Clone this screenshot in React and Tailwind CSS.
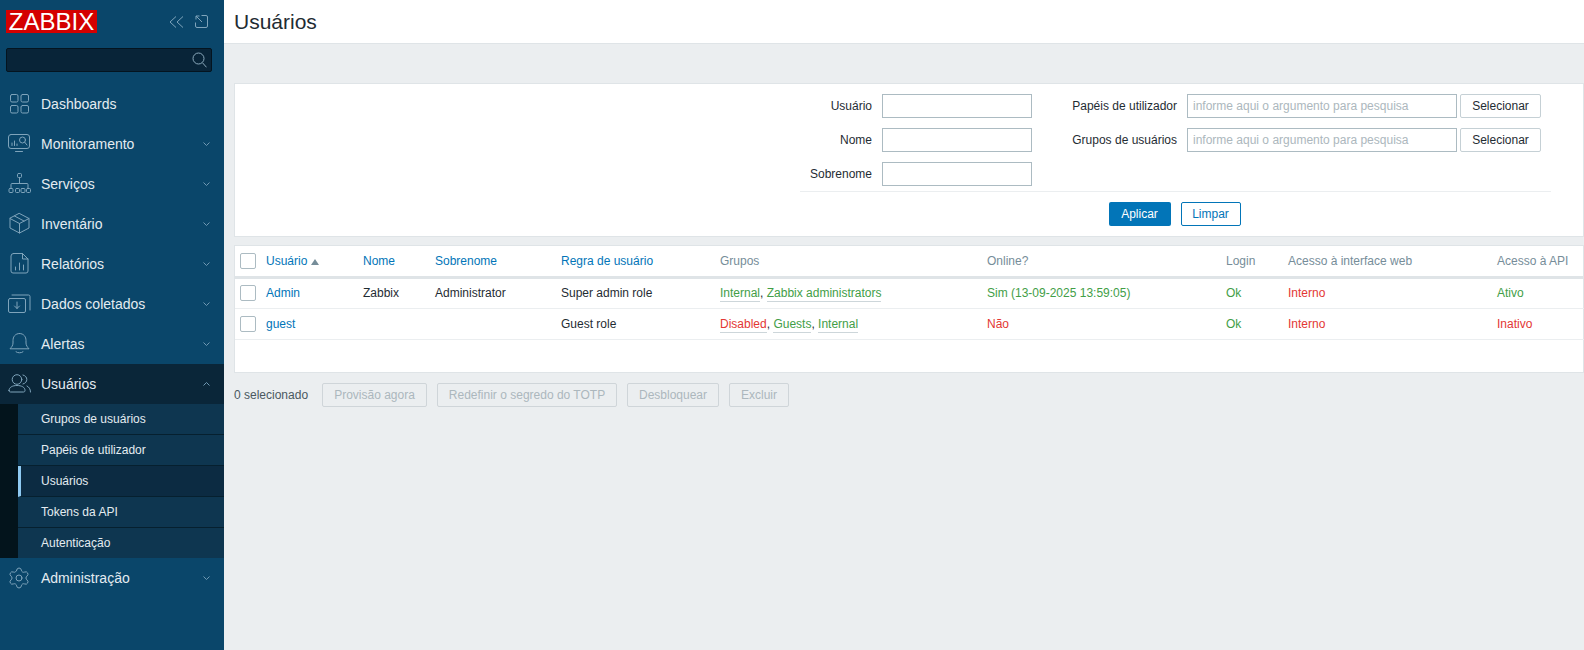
import React from 'react'
import { Settings } from 'lucide-react'

const stroke = { fill: 'none', stroke: '#7fa4bb', strokeWidth: 1, strokeLinecap: 'round', strokeLinejoin: 'round' }

function Ico({ children }) {
  return <svg width="24" height="24" viewBox="0 0 24 24" {...stroke}>{children}</svg>
}

const icons = {
  dashboards: (
    <Ico>
      <rect x="3.5" y="2.5" width="7.5" height="7.5" rx="1.5" />
      <rect x="14" y="2.5" width="7.5" height="7.5" rx="1.5" />
      <rect x="3.5" y="13.5" width="7.5" height="7.5" rx="1.5" />
      <rect x="14" y="13.5" width="7.5" height="7.5" rx="1.5" />
    </Ico>
  ),
  monitor: (
    <Ico>
      <rect x="1.5" y="2.5" width="21" height="14" rx="2.5" />
      <path d="M8.5 19.5h7M5 13.5v-2.5M7.5 13.5v-4.5M10 13.5v-1.5M17.7 10.2l2.3 2.8" />
      <circle cx="15.5" cy="8" r="3" />
    </Ico>
  ),
  services: (
    <Ico>
      <rect x="10.5" y="1.5" width="4" height="4" rx="1" />
      <path d="M12.500 5.500v6M4 16v-3.500a1 1 0 0 1 1-1h15a1 1 0 0 1 1 1V16" />
      <rect x="2" y="16.5" width="4" height="4" rx="1" />
      <rect x="8.5" y="16.5" width="4" height="4" rx="1" />
      <rect x="14" y="16.5" width="4" height="4" rx="1" />
      <rect x="19.5" y="16.5" width="4" height="4" rx="1" />
    </Ico>
  ),
  inventory: (
    <Ico>
      <path d="M12.5 1.5 22 6.5v9.5l-9.5 5L3 16V6.5zM3 6.5l9.5 5 9.5-5M12.5 11.5V21M7.5 4l9.5 5" />
    </Ico>
  ),
  reports: (
    <Ico>
      <path d="M6.5 1.5h9l5.500 5.500v12a2 2 0 0 1-2 2H6a2 2 0 0 1-2-2V4a2.500 2.500 0 0 1 2.500-2.500zM15.500 1.500V7H21M8.500 18v-3M12.500 18v-7M16.500 18v-5" />
    </Ico>
  ),
  data: (
    <Ico>
      <rect x="1.5" y="6.5" width="17" height="14" rx="1.5" />
      <path d="M5 3h16.500A1.500 1.500 0 0 1 23 4.500V18M10 10v6.500M7.500 14l2.500 2.500 2.500-2.500" />
    </Ico>
  ),
  alerts: (
    <Ico>
      <path d="M12.500 1.500c-4.500 0-6.500 3.500-6.500 7V11c0 2.500-1.500 4.200-3 5.800h19c-1.500-1.600-3-3.300-3-5.800V8.500c0-3.500-2-7-6.500-7zM9 19.800c1.500 1.400 5.500 1.400 7 0" />
    </Ico>
  ),
  users: (
    <Ico>
      <circle cx="10" cy="7.500" r="4.800" />
      <path d="M2 18.500c0-3.300 3.500-5 8-5s8 1.700 8 5c0 1-.6 1.500-1.500 1.500h-13C2.600 20 2 19.500 2 18.500zM16 3c2.500.6 3.800 2.500 3.800 4.500S18.500 11.400 16 12M20 14c2 1 3.500 3 3.500 6" />
    </Ico>
  ),
  admin: <Settings size={24} strokeWidth={1} color="#7fa4bb" />,
}

function Chevron({ up }) {
  return (
    <svg width="7" height="4" viewBox="0 0 7 4" className="ml-auto mr-[14px]" fill="none" stroke="#6f98b2" strokeWidth="1">
      <path d={up ? 'M.5 3.500 3.500.500l3 3' : 'M.5.500l3 3 3-3'} />
    </svg>
  )
}

function NavItem({ icon, label, arrow, active }) {
  return (
    <div className={active ? 'flex items-center h-10 pl-[7px] bg-[#0a2639]' : 'flex items-center h-10 pl-[7px]'}>
      <span className="w-6 h-6 flex-none">{icons[icon]}</span>
      <span className="ml-[10px] text-[14px] text-[#e4ecf1]">{label}</span>
      {arrow && <Chevron up={active} />}
    </div>
  )
}

const subItems = ['Grupos de usuários', 'Papéis de utilizador', 'Usuários', 'Tokens da API', 'Autenticação']

function Sidebar() {
  return (
    <aside className="w-[224px] flex-none h-full bg-[#0a466a]">
      <div className="flex items-center h-[23px] mt-[10px] ml-[6px]">
        <div className="w-[91px] h-[23px] bg-[#d40000] text-white text-[24px] leading-[23px] text-center">ZABBIX</div>
        <svg width="15" height="12" viewBox="0 0 15 12" className="ml-[72px]" fill="none" stroke="#7fa4bb">
          <path d="M7 .500 1 6l6 5.500M14 .500 8 6l6 5.500" />
        </svg>
        <svg width="13" height="13" viewBox="0 0 13 13" className="ml-[11px]" fill="none" stroke="#7fa4bb">
          <path d="M6.500 .500H11A1.500 1.500 0 0 1 12.500 2v9a1.500 1.500 0 0 1-1.500 1.500H2A1.500 1.500 0 0 1 .5 11V7.500M1 1l6 6M1 4.500V1h3.500" />
        </svg>
      </div>
      <div className="flex items-center justify-end h-6 mt-[15px] mx-[6px] w-[206px] bg-[#082438] border border-[#04141f] rounded-[2px] pr-[4px]">
        <svg width="15" height="16" viewBox="0 0 15 16" fill="none" stroke="#8aa9bc">
          <circle cx="6.500" cy="6.500" r="5.500" />
          <path d="m10.500 10.800 4 4.500" />
        </svg>
      </div>
      <nav className="mt-3">
        <NavItem icon="dashboards" label="Dashboards" />
        <NavItem icon="monitor" label="Monitoramento" arrow />
        <NavItem icon="services" label="Serviços" arrow />
        <NavItem icon="inventory" label="Inventário" arrow />
        <NavItem icon="reports" label="Relatórios" arrow />
        <NavItem icon="data" label="Dados coletados" arrow />
        <NavItem icon="alerts" label="Alertas" arrow />
        <NavItem icon="users" label="Usuários" arrow active />
        <div className="bg-[#03141c] pl-[18px]">
          {subItems.map((s, i) => (
            <div
              key={s}
              className={
                (s === 'Usuários' ? 'bg-[#0c2b42] border-l-[3px] border-l-[#8fcaf2] pl-[20px] ' : 'bg-[#0e3650] pl-[23px] ') +
                (i === 4 ? 'h-[30px] ' : 'h-[31px] border-b border-b-[#06202f] ') +
                'flex items-center text-[12px] text-[#e4ecf1]'
              }
            >
              {s}
            </div>
          ))}
        </div>
        <NavItem icon="admin" label="Administração" arrow />
      </nav>
    </aside>
  )
}

const inputCls = 'h-6 border border-[#acbbc2] bg-white px-[5px] text-[12px] outline-none placeholder:text-[#acb7bd]'
const labelCls = 'text-right text-[#1f2c33]'
const selectCls = 'h-6 w-[81px] -ml-[7px] border border-[#c5d0d5] rounded-[2px] text-[#1f2c33]'

function Filter() {
  return (
    <section className="h-[154px] bg-white border border-[#dfe4e7] pt-[10px] pr-[32px] flex flex-col items-end">
      <div className="w-[751px]">
        <div className="grid grid-cols-[72px_150px_135px_270px_80px] gap-x-[10px] gap-y-[10px] items-center pb-[5px] border-b border-b-[#ebeef0]">
          <label className={labelCls}>Usuário</label>
          <input className={inputCls + ' w-[150px]'} />
          <label className={labelCls}>Papéis de utilizador</label>
          <input className={inputCls + ' w-[270px]'} placeholder="informe aqui o argumento para pesquisa" />
          <button className={selectCls}>Selecionar</button>
          <label className={labelCls}>Nome</label>
          <input className={inputCls + ' w-[150px]'} />
          <label className={labelCls}>Grupos de usuários</label>
          <input className={inputCls + ' w-[270px]'} placeholder="informe aqui o argumento para pesquisa" />
          <button className={selectCls}>Selecionar</button>
          <label className={labelCls}>Sobrenome</label>
          <input className={inputCls + ' w-[150px]'} />
        </div>
        <div className="flex justify-center gap-[10px] mt-[10px] pr-[2px]">
          <button className="h-6 w-[62px] bg-[#0275b8] rounded-[2px] text-white">Aplicar</button>
          <button className="h-6 w-[60px] bg-white border border-[#0275b8] rounded-[2px] text-[#0275b8]">Limpar</button>
        </div>
      </div>
    </section>
  )
}

function Check() {
  return <span className="block w-4 h-4 ml-[5px] bg-white border border-[#acbbc2] rounded-[2px]" />
}

function Group({ red, children }) {
  return (
    <span className={(red ? 'text-[#e33734]' : 'text-[#429e47]') + ' border-b border-b-[#cdd6da] pb-px'}>{children}</span>
  )
}

const link = 'text-[#0275b8]'
const green = 'text-[#429e47]'
const red = 'text-[#e33734]'

function UsersTable() {
  const th = 'pl-[5px] text-left font-normal border-b-[3px] border-b-[#dfe4e7] h-[31px]'
  const td = 'pl-[5px] h-[31px] border-b border-b-[#ebeef0] whitespace-nowrap'
  return (
    <section className="mt-[8px] bg-white border border-[#dfe4e7] pb-[32px]">
      <table className="table-fixed w-[1350px] border-collapse">
        <colgroup>
          <col className="w-[26px]" />
          <col className="w-[97px]" />
          <col className="w-[72px]" />
          <col className="w-[126px]" />
          <col className="w-[159px]" />
          <col className="w-[267px]" />
          <col className="w-[239px]" />
          <col className="w-[62px]" />
          <col className="w-[209px]" />
          <col className="w-[93px]" />
        </colgroup>
        <thead>
          <tr>
            <th className="border-b-[3px] border-b-[#dfe4e7]"><Check /></th>
            <th className={th + ' ' + link}>
              Usuário
              <svg width="8" height="6" viewBox="0 0 8 6" className="inline-block ml-[4px]" fill="#768d99"><path d="M4 0l4 6H0z" /></svg>
            </th>
            <th className={th + ' ' + link}>Nome</th>
            <th className={th + ' ' + link}>Sobrenome</th>
            <th className={th + ' ' + link}>Regra de usuário</th>
            <th className={th + ' text-[#768d99]'}>Grupos</th>
            <th className={th + ' text-[#768d99]'}>Online?</th>
            <th className={th + ' text-[#768d99]'}>Login</th>
            <th className={th + ' text-[#768d99]'}>Acesso à interface web</th>
            <th className={th + ' text-[#768d99]'}>Acesso à API</th>
          </tr>
        </thead>
        <tbody className="text-[#1f2c33]">
          <tr>
            <td className="border-b border-b-[#ebeef0]"><Check /></td>
            <td className={td + ' ' + link}>Admin</td>
            <td className={td}>Zabbix</td>
            <td className={td}>Administrator</td>
            <td className={td}>Super admin role</td>
            <td className={td}><Group>Internal</Group>, <Group>Zabbix administrators</Group></td>
            <td className={td + ' ' + green}>Sim (13-09-2025 13:59:05)</td>
            <td className={td + ' ' + green}>Ok</td>
            <td className={td + ' ' + red}>Interno</td>
            <td className={td + ' ' + green}>Ativo</td>
          </tr>
          <tr>
            <td className="border-b border-b-[#ebeef0]"><Check /></td>
            <td className={td + ' ' + link}>guest</td>
            <td className={td}></td>
            <td className={td}></td>
            <td className={td}>Guest role</td>
            <td className={td}><Group red>Disabled</Group>, <Group>Guests</Group>, <Group>Internal</Group></td>
            <td className={td + ' ' + red}>Não</td>
            <td className={td + ' ' + green}>Ok</td>
            <td className={td + ' ' + red}>Interno</td>
            <td className={td + ' ' + red}>Inativo</td>
          </tr>
        </tbody>
      </table>
    </section>
  )
}

function Actions() {
  const btn = 'h-6 border border-[#cfd5d9] rounded-[2px] text-[#acb7bd] bg-[#ebeef0]'
  return (
    <div className="flex items-center mt-[10px]">
      <span className="text-[#4a5860] w-[88px]">0 selecionado</span>
      <div className="flex gap-[10px]">
        <button className={btn + ' w-[105px]'}>Provisão agora</button>
        <button className={btn + ' w-[180px]'}>Redefinir o segredo do TOTP</button>
        <button className={btn + ' w-[92px]'}>Desbloquear</button>
        <button className={btn + ' w-[60px]'}>Excluir</button>
      </div>
    </div>
  )
}

export default function App() {
  return (
    <div className="flex h-screen overflow-hidden bg-[#ebeef0] text-[12px] font-['Liberation_Sans',Arial,sans-serif]">
      <Sidebar />
      <main className="flex-1 min-w-0 overflow-hidden">
        <header className="h-[44px] bg-white border-b border-b-[#dfe4e7] pl-[10px] flex items-center">
          <h1 className="text-[21px] text-[#1f2c33]">Usuários</h1>
        </header>
        <div className="pl-[10px] pt-[39px]">
          <Filter />
          <UsersTable />
          <Actions />
        </div>
      </main>
    </div>
  )
}
